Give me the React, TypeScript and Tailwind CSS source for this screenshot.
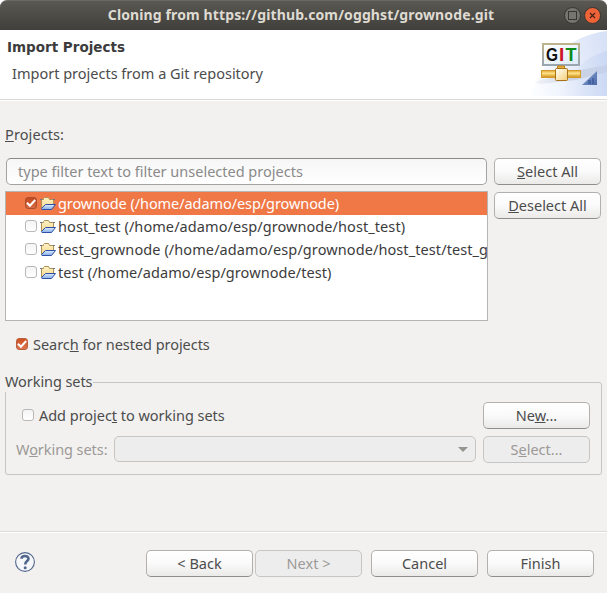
import React from "react";

type ButtonProps = { children: React.ReactNode; disabled?: boolean; className?: string };

function Button({ children, disabled, className = "" }: ButtonProps) {
  return (
    <button
      className={`flex h-[27px] w-[107px] shrink-0 items-center justify-center rounded-[5px] border pb-[2px] whitespace-pre ${
        disabled
          ? "border-[#c6c5c4] bg-[#ededed] text-[#9c9996]"
          : "border-[#b1b0ae] border-b-[#8f8e8c] bg-linear-to-b from-white via-[#fafafa] to-[#ebeae9] text-[#4c4c4c]"
      } ${className}`}
    >
      {children}
    </button>
  );
}

function Checkbox({ checked, dark }: { checked?: boolean; dark?: boolean }) {
  return (
    <span
      className={`flex size-[12px] shrink-0 items-center justify-center rounded-[3px] border ${
        checked
          ? dark
            ? "border-[#a94e2e] bg-linear-to-b from-[#c4481d] to-[#d56a43]"
            : "border-[#b9603f] bg-linear-to-b from-[#d04f1c] to-[#dc7550]"
          : "border-[#b9b8b7] bg-linear-to-b from-[#f4f4f4] to-white"
      }`}
    >
      {checked && (
        <svg className="size-[10px] shrink-0" viewBox="0 0 10 10" fill="none">
          <path d="M0.900 4.800L3.900 7.700L9.200 2" stroke="white" strokeWidth="2" />
        </svg>
      )}
    </span>
  );
}

function FolderIcon() {
  return (
    <svg className="h-4 w-4 shrink-0" viewBox="0 0 16 16">
      <defs>
        <linearGradient id="folderBack" x1="0" y1="0" x2="0" y2="1">
          <stop offset="0" stopColor="#fff3c4" />
          <stop offset="1" stopColor="#f6d68c" />
        </linearGradient>
        <linearGradient id="folderFront" x1="0" y1="0" x2="0" y2="1">
          <stop offset="0" stopColor="#dcebfd" />
          <stop offset="1" stopColor="#86ade6" />
        </linearGradient>
      </defs>
      <path d="M1.500 13.500V4.500H3.500V3.500L4.500 2.500H8.500L9.500 4.500H13.500V9" fill="url(#folderBack)" stroke="#b08f55" />
      <path d="M0 4.500H2M13 4.500H15" stroke="#6f7488" />
      <path d="M1.500 13.500L5.500 9.500H15.500L11.500 14.500H2Z" fill="url(#folderFront)" stroke="#2f4fa8" />
    </svg>
  );
}

function GitBanner() {
  return (
    <svg className="h-[66px] w-[77px]" viewBox="0 0 77 66">
      <defs>
        <linearGradient id="bg" x1="0" y1="0.6" x2="1" y2="0.4">
          <stop offset="0" stopColor="#fafcff" />
          <stop offset="1" stopColor="#d8e2f7" />
        </linearGradient>
        <linearGradient id="glow" x1="0" y1="0" x2="1" y2="0">
          <stop offset="0" stopColor="#c9d7f3" stopOpacity="0" />
          <stop offset="1" stopColor="#c3d2f2" stopOpacity=".6" />
        </linearGradient>
        <linearGradient id="shade" x1="0" y1="0" x2="1" y2="0">
          <stop offset="0" stopColor="#a9b0bf" stopOpacity=".1" />
          <stop offset="0.5" stopColor="#a9b0bf" stopOpacity=".4" />
          <stop offset="1" stopColor="#b4bfd6" stopOpacity=".3" />
        </linearGradient>
        <linearGradient id="sign" x1="0" y1="0" x2="1" y2="1">
          <stop offset="0" stopColor="#ffffff" />
          <stop offset="1" stopColor="#dcebf8" />
        </linearGradient>
        <linearGradient id="frame" x1="0" y1="0" x2="0" y2="1">
          <stop offset="0" stopColor="#bdb48c" />
          <stop offset="1" stopColor="#9aa5b2" />
        </linearGradient>
        <linearGradient id="pipe" x1="0" y1="0" x2="0" y2="1">
          <stop offset="0" stopColor="#e0a42a" />
          <stop offset="0.4" stopColor="#ffe48c" />
          <stop offset="1" stopColor="#d08c10" />
        </linearGradient>
        <linearGradient id="hub" x1="0" y1="0" x2="1" y2="1">
          <stop offset="0" stopColor="#ffffff" />
          <stop offset="1" stopColor="#f4cf74" />
        </linearGradient>
        <linearGradient id="tri" x1="0" y1="0" x2="1" y2="1">
          <stop offset="0" stopColor="#8fa6d4" />
          <stop offset="1" stopColor="#4a69a8" />
        </linearGradient>
      </defs>
      <path d="M2 66C8 34 40 5 77 1V66Z" fill="url(#bg)" />
      <path d="M30 66C40 42 56 26 77 21V66Z" fill="url(#glow)" />
      <path d="M4 52L50 40L77 35V42L46 50L10 54Z" fill="url(#shade)" />
      <rect x="13" y="14" width="36" height="21" fill="url(#sign)" stroke="url(#frame)" strokeWidth="2" />
      <g fontFamily="Liberation Sans" fontWeight="700" fontSize="19">
        <text x="16" y="31" textLength="12" lengthAdjust="spacingAndGlyphs" fill="#111">G</text>
        <text x="29" y="31" fill="#cc1428">I</text>
        <text x="35.500" y="31" textLength="11" lengthAdjust="spacingAndGlyphs" fill="#078a16">T</text>
      </g>
      <path d="M27.500 36H34.500V40H27.500Z" fill="#e9b23b" stroke="#b98322" />
      <rect x="11.500" y="40.500" width="39" height="7" fill="url(#pipe)" stroke="#d29a2c" />
      <rect x="25.500" y="38.500" width="12" height="12" rx="1" fill="url(#hub)" stroke="#a87215" />
      <path d="M67 41V55H52Z" fill="url(#tri)" />
      <path d="M58 54V50H61V54ZM62 54V48H64V54Z" fill="#2d4a88" fillOpacity=".5" />
    </svg>
  );
}

const projects = [
  { name: "grownode (/home/adamo/esp/grownode)", checked: true, spacing: "tracking-[-0.075px]" },
  { name: "host_test (/home/adamo/esp/grownode/host_test)", spacing: "tracking-[0.075px]" },
  { name: "test_grownode (/home/adamo/esp/grownode/host_test/test_g", spacing: "tracking-[0.09px]" },
  { name: "test (/home/adamo/esp/grownode/test)", spacing: "tracking-[0.07px]" },
];

export default function App() {
  return (
    <div className="flex h-[593px] w-[607px] flex-col overflow-hidden bg-[#f2f1f0] font-['Noto_Sans',sans-serif] text-[14.5px] leading-5 whitespace-nowrap text-[#4c4c4c]">
      <div className="shrink-0 bg-white">
        <header className="flex h-[30px] items-center rounded-t-[7px] border-t border-[#6b6964] bg-linear-to-b from-[#5a5852] to-[#403f3b] pr-[6px] pb-px">
          <h1 className="flex-1 pb-px pl-[38px] text-center text-[14px] font-bold tracking-[0.12px] text-[#dfdbd2]">
            <span>Cloning from https://github.com/ogghst/grownode.git</span>
          </h1>
          <div className="flex gap-[3px]">
            <span className="flex size-[17px] items-center justify-center rounded-full border border-[#363531] bg-[#77756f]">
              <span className="size-[9px] border border-[#363531]" />
            </span>
            <span className="flex size-[17px] items-center justify-center rounded-full border border-[#363531] bg-[#ee6338]">
              <svg className="size-[9px]" viewBox="0 0 9 9">
                <path d="M2 2L7 7M7 2L2 7" stroke="#4b2318" strokeWidth="1.300" />
              </svg>
            </span>
          </div>
        </header>
      </div>

      <section className="flex h-[69px] shrink-0 justify-between bg-white">
        <div className="pt-[7px] pl-[7px]">
          <h2 className="font-['DejaVu_Sans',sans-serif] text-[13.5px] font-bold text-[#3c3c3c]"><span>Import Projects</span></h2>
          <p className="mt-[6px] pl-[5px]"><span>Import projects from a Git repository</span></p>
        </div>
        <GitBanner />
      </section>
      <div className="h-[2px] shrink-0 border-t border-[#d9d9d8] bg-white" />

      <main className="flex h-[430px] shrink-0 flex-col pt-[23px] pl-[5px]">
        <div className="tracking-[0.1px]"><span><u>P</u>rojects:</span></div>
        <div className="mt-[14px] flex gap-[6px]">
          <div>
            <div className="ml-px flex h-[27px] w-[481px] items-center rounded-[5px] border border-[#a3a2a0] border-t-[#8b8a89] bg-linear-to-b from-[#f6f6f6] to-white pb-[2px] pl-[11px] text-[#8a8a8a]">
              <span>type filter text to filter unselected projects</span>
            </div>
            <ul className="mt-[6px] h-[130px] w-[483px] overflow-hidden border border-[#b6b5b4] bg-white">
              {projects.map((p) => (
                <li key={p.name} className={`flex h-[23px] items-center pb-[2px] pl-[19px] ${p.checked ? "bg-[#f07746] text-white" : "text-[#3c3c3c]"}`}>
                  <Checkbox checked={p.checked} dark />
                  <span className="ml-[3px]"><FolderIcon /></span>
                  <span className={`ml-[2px] ${p.spacing}`}>{p.name}</span>
                </li>
              ))}
            </ul>
          </div>
          <div className="flex flex-col gap-[7px]">
            <Button><span><u>S</u>elect All</span></Button>
            <Button><span><u>D</u>eselect All</span></Button>
          </div>
        </div>

        <label className="mt-[13px] flex items-center gap-[5px] pl-[11px] tracking-[-0.04px]">
          <Checkbox checked />
          <span>Searc<u>h</u> for nested projects</span>
        </label>

        <fieldset className="mt-[18px] h-[103px] w-[597px] rounded-[3px] border border-[#c6c5c4]">
          <legend className="-ml-px h-5 pr-px leading-[18px] tracking-[-0.08px]">Working sets</legend>
          <div className="mt-[10px] flex h-[27px] items-center justify-between pr-[11px] pl-4">
            <label className="flex items-center gap-[5px] pb-[2px] tracking-[-0.03px]">
              <Checkbox />
              <span>Add projec<u>t</u> to working sets</span>
            </label>
            <Button><span>Ne<u>w</u>...</span></Button>
          </div>
          <div className="mt-[7px] flex items-start pr-[11px] pl-[10px]">
            <span className="w-[98px] pt-[3px] tracking-[-0.06px] text-[#9c9996]"><span>W<u>o</u>rking sets:</span></span>
            <div className="flex h-[26px] w-[362px] items-center justify-end rounded-[5px] border border-[#c6c5c4] bg-[#ededed] pr-[7px]">
              <svg className="h-[5px] w-[10px]" viewBox="0 0 10 5"><path d="M0 0H10L5 5Z" fill="#96948f" /></svg>
            </div>
            <Button disabled className="ml-[7px]"><span>S<u>e</u>lect...</span></Button>
          </div>
        </fieldset>
      </main>

      <div className="h-[2px] shrink-0 border-t border-[#dcdbda] bg-white" />
      <footer className="flex flex-1 items-start pt-[17px] pr-[13px] pl-[15px]">
        <svg className="mt-[2px] size-5" viewBox="0 0 20 20">
          <circle cx="10" cy="10" r="9.400" fill="#f6f7fa" stroke="#53678c" strokeWidth="1.100" />
          <path d="M6.500 6.800C6.500 3 13.500 3 13.500 6.800C13.500 9.300 10.200 9 10.200 12.600" fill="none" stroke="#53678c" strokeWidth="2.600" />
          <circle cx="10.200" cy="15.700" r="1.500" fill="#53678c" />
        </svg>
        <div className="ml-auto flex">
          <Button><span>&lt; Back</span></Button>
          <Button disabled className="ml-[2px]"><span>Next &gt;</span></Button>
          <Button className="ml-[9px]"><span>Cancel</span></Button>
          <Button className="ml-[9px]"><span>Finish</span></Button>
        </div>
      </footer>
    </div>
  );
}
